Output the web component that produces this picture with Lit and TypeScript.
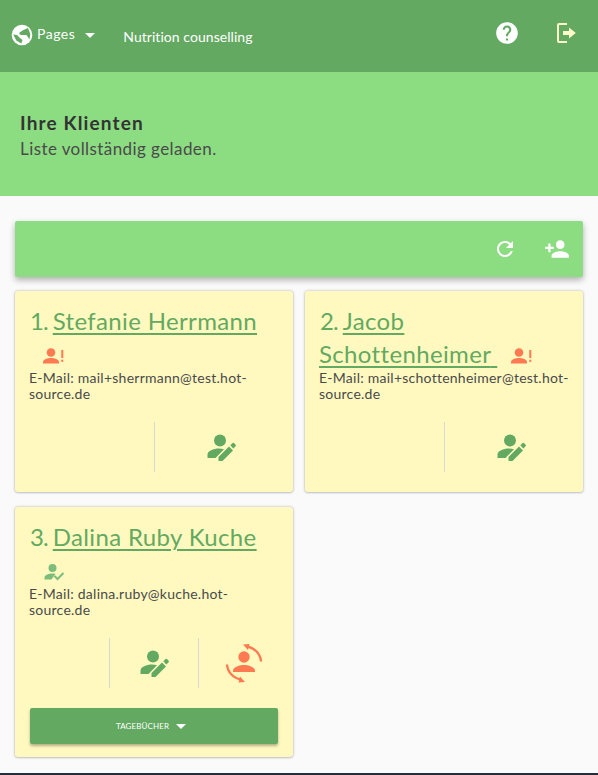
import { LitElement, html, css, svg } from "lit";
import { customElement } from "lit/decorators.js";

const icon = (size: number, vb: string, body: unknown, cls = "") =>
  html`<svg class=${cls} width=${size} height=${size} viewBox=${vb} aria-hidden="true">${body}</svg>`;

const globe = icon(24, "0 0 24 24", svg`<circle cx="12" cy="12" r="10.300" fill="#fff"/><path fill="#63a961" d="M9.500 9.500l4-2.500 4.500-2 2.300 6-.8 5.500-3-4.500h-4.500l-2.500-.5zM3.200 11.500l3.800.5 3 3 2.500 2-1.200 3.500-5-3z"/>`);
const help = icon(26, "0 0 24 24", svg`<path fill="#fff" d="M12 2C6.480 2 2 6.480 2 12s4.480 10 10 10 10-4.480 10-10S17.520 2 12 2zm1 17h-2v-2h2v2zm2.070-7.750l-.9.92C13.450 12.900 13 13.500 13 15h-2v-.5c0-1.100.45-2.100 1.170-2.830l1.240-1.260c.37-.36.59-.86.59-1.410 0-1.100-.9-2-2-2s-2 .9-2 2H8c0-2.210 1.790-4 4-4s4 1.790 4 4c0 .88-.36 1.680-.93 2.250z"/>`);
const logout = icon(22, "0 0 22 22", svg`<path fill="none" stroke="#fff8c8" stroke-width="2" d="M12 2H4a1 1 0 0 0-1 1v16a1 1 0 0 0 1 1h8"/><path fill="#fff8c8" d="M8 9h6V5.500l6.800 5.500-6.800 5.500V13H8z"/>`);
const refresh = icon(24, "0 0 24 24", svg`<path fill="#fff" d="M17.650 6.350C16.200 4.900 14.210 4 12 4c-4.420 0-7.990 3.580-7.990 8s3.570 8 7.990 8c3.730 0 6.840-2.550 7.730-6h-2.080c-.82 2.330-3.040 4-5.650 4-3.310 0-6-2.690-6-6s2.690-6 6-6c1.660 0 3.140.69 4.220 1.780L13 11h7V4l-2.350 2.350z"/>`);
const personAdd = icon(26, "0 0 24 24", svg`<path fill="#fff" d="M15 12c2.210 0 4-1.790 4-4s-1.790-4-4-4-4 1.790-4 4 1.790 4 4 4zm-9-2V7H4v3H1v2h3v3h2v-3h3v-2H6zm9 4c-2.670 0-8 1.340-8 4v2h16v-2c0-2.660-5.330-4-8-4z"/>`);

const alertIcon = icon(24, "0 0 24 24", svg`<g fill="#ff7a50"><circle cx="10" cy="7.500" r="4.300"/><path d="M2 18.500v-1.500c0-2.800 5-4 8-4s8 1.200 8 4v1.500z"/><rect x="20.300" y="5" width="2" height="8"/><rect x="20.300" y="14.700" width="2" height="2.200"/></g>`, "status");
const okIcon = icon(24, "0 0 24 24", svg`<g fill="#7dbd7b"><circle cx="11.500" cy="7" r="4"/><path d="M3.500 18.500v-2c0-2.500 4.500-4 8-4 1 0 2 .1 3 .4l-4 5.600z"/></g><path fill="none" stroke="#7dbd7b" stroke-width="2" d="M13.500 15l3 3 6-6"/>`, "status");

const editIcon = icon(30, "0 0 30 30", svg`<g fill="#63a961"><circle cx="14" cy="8.500" r="6"/><path d="M1.500 26v-3.500c0-3.500 6-6 11.500-6 1.800 0 3.500.3 5 .7L9.500 26z"/><path d="M12.500 29v-4l10.500-10.500 4 4L16.500 29z"/><path d="M24.300 13.200l2.300-2.200a1 1 0 0 1 1.400 0l1.600 1.800a1 1 0 0 1 0 1.400l-2.300 2.300z"/></g>`);
const swapIcon = icon(40, "0 0 40 40", svg`<g fill="#ff7a50"><circle cx="20" cy="14" r="5.700"/><path d="M9 29v-1.500c0-3.500 7-5.500 11-5.500s11 2 11 5.500V29z"/><path d="M19 1.500l6.500-.5-1.500 6z"/><path d="M21 39l-6.500.5 1.500-6z"/></g><path fill="none" stroke="#ff7a50" stroke-width="2.400" d="M23 3.500C31 5 36.500 11 37 18.500"/><path fill="none" stroke="#ff7a50" stroke-width="2.400" d="M17 36.500C9 35 3.500 29 3 21.500"/>`);

const clients = [
  { n: 1, name: "Stefanie Herrmann", trail: false, email: "E-Mail: mail+sherrmann@test.hot-source.de", status: alertIcon, actions: [null, editIcon], diaries: false },
  { n: 2, name: "Jacob Schottenheimer", trail: true, email: "E-Mail: mail+schottenheimer@test.hot-source.de", status: alertIcon, actions: [null, editIcon], diaries: false },
  { n: 3, name: "Dalina Ruby Kuche", trail: false, email: "E-Mail: dalina.ruby@kuche.hot-source.de", status: okIcon, actions: [null, editIcon, swapIcon], diaries: true },
];

@customElement("app-root")
export class AppRoot extends LitElement {
  static styles = css`
    :host {
      display: flex;
      flex-direction: column;
      height: 775px;
      background: #fafafa;
      font-family: "Lato", "Noto Sans", sans-serif;
      color: #4a4a4a;
      overflow: hidden;
    }
    svg { display: block; flex: none; }
    .top {
      height: 72px;
      background: #63a961;
      display: flex;
      align-items: center;
      padding: 0 21px 0 10px;
      color: #fff;
      font-size: 14px;
    }
    .pages { display: flex; align-items: center; gap: 3px; margin-top: -2px; }
    .pages-label { margin-top: -3px; letter-spacing: .5px; }
    .caret {
      width: 0; height: 0;
      border-left: 5px solid transparent;
      border-right: 5px solid transparent;
      border-top: 5px solid #fff;
    }
    .pages .caret { margin-left: 7px; }
    .title { margin-left: 28px; letter-spacing: .05px; }
    .top-actions { margin-left: auto; display: flex; align-items: center; gap: 35px; margin-top: -6px; }
    .hero {
      height: 124px;
      background: #8cdc82;
      display: flex;
      flex-direction: column;
      justify-content: center;
      padding: 2px 0 0 20px;
      box-sizing: border-box;
    }
    .hero h1 { margin: 0; font-size: 19px; line-height: 24px; font-weight: 700; color: #333; letter-spacing: 1.15px; }
    .hero p { margin: 4px 0 0; font-size: 17px; line-height: 20px; color: #4a4a4a; letter-spacing: .42px; }
    main { flex: 1; padding: 25px 15px 0 15px; display: flex; flex-direction: column; gap: 14px; }
    .bar {
      height: 56px;
      background: #8cdc82;
      border-radius: 2px;
      box-shadow: 0 3px 6px rgba(0,0,0,.3);
      display: flex;
      align-items: center;
      justify-content: flex-end;
      gap: 27px;
      padding-right: 13px;
    }
    .grid { display: grid; grid-template-columns: 278px 278px; column-gap: 12px; row-gap: 15px; align-items: start; }
    .card {
      background: #fff9c0;
      border-radius: 3px;
      box-shadow: 0 0 3px rgba(0,0,0,.28), 0 1px 2px rgba(0,0,0,.12);
      padding: 13px 8px 20px 14px;
    }
    .card.diary { padding-bottom: 13px; }
    .name { margin: 0; min-height: 66px; font-size: 24px; line-height: 33px; font-weight: 400; color: #63a961; letter-spacing: .35px; }
    .num { margin-left: 1px; letter-spacing: -1px; }
    .name a { color: inherit; text-decoration: underline; text-underline-offset: 3px; text-decoration-thickness: 2px; }
    .status { display: inline-block; vertical-align: -6px; margin-left: 12px; }
    .email { margin: 0; font-size: 14px; line-height: 16px; color: #4a4a4a; letter-spacing: .25px; }
    .actions { display: flex; height: 50px; margin: 20px -3px 0 -9px; }
    .cell { flex: 1; display: flex; align-items: center; justify-content: center; }
    .cell + .cell { border-left: 1px solid #d8d8d8; }
    .diaries {
      margin: 20px 0 0 1px;
      height: 36px;
      width: 248px;
      border: 0;
      padding: 0 6px 0 0;
      border-radius: 2px;
      background: #63a961;
      color: #fff;
      font: inherit;
      font-size: 8px;
      text-transform: uppercase;
      display: flex;
      align-items: center;
      justify-content: center;
      gap: 7px;
      box-shadow: 0 2px 3px rgba(0,0,0,.3);
      letter-spacing: .1px;
    }
    footer { height: 2px; background: #262b3a; }
  `;

  render() {
    return html`
      <header class="top">
        <div class="pages">${globe}<span class="pages-label">Pages</span><span class="caret"></span></div>
        <span class="title">Nutrition counselling</span>
        <div class="top-actions">${help}${logout}</div>
      </header>
      <section class="hero">
        <h1>Ihre Klienten</h1>
        <p>Liste vollständig geladen.</p>
      </section>
      <main>
        <div class="bar">${refresh}${personAdd}</div>
        <div class="grid">
          ${clients.map(
            (c) => html`
              <article class="card ${c.diaries ? "diary" : ""}">
                <h2 class="name"><span class="num">${`${c.n}. `}</span><a href="#">${c.name}${c.trail ? html`&nbsp;` : ""}</a>${c.status}</h2>
                <p class="email">${c.email}</p>
                <div class="actions">
                  ${c.actions.map((a) => html`<div class="cell">${a}</div>`)}
                </div>
                ${c.diaries
                  ? html`<button class="diaries">Tagebücher <span class="caret"></span></button>`
                  : ""}
              </article>
            `
          )}
        </div>
      </main>
      <footer></footer>
    `;
  }
}
